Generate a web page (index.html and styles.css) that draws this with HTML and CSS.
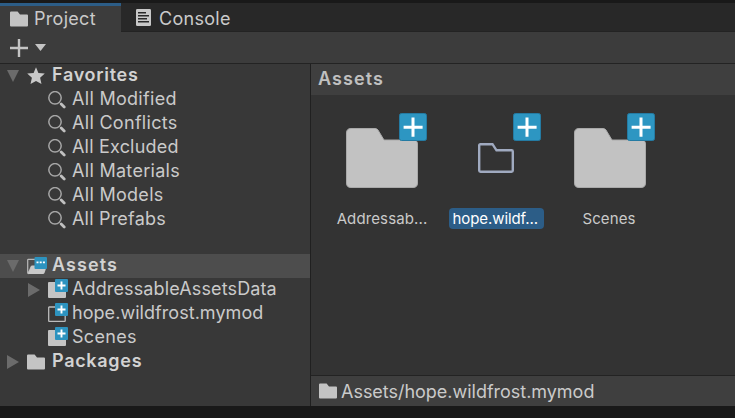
FILE: index.html
```
<!DOCTYPE html>
<html lang="en">
<head>
<meta charset="utf-8">
<title>Project</title>
<link rel="stylesheet" href="styles.css">
</head>
<body>
<svg class="defs" width="0" height="0">
  <symbol id="folder" viewBox="0 0 18 16"><path d="M0 1.6Q0 .5 1.1 .5H7.6L10 3.4H17Q18 3.4 18 4.4V14.5Q18 15.6 17 15.6H1Q0 15.6 0 14.5Z" fill="#c4c4c4"/></symbol>
  <symbol id="search" viewBox="0 0 18 18"><circle cx="7" cy="6.8" r="6.2" fill="none" stroke="#a6a6a6" stroke-width="1.5"/><path d="M13.200 13L16.200 16" stroke="#c0c0c0" stroke-width="2.800" stroke-linecap="round"/></symbol>
  <symbol id="plus" viewBox="0 0 28 28"><rect x=".5" y=".5" width="27" height="27" rx="2" fill="#2d96c2" stroke="#247ba3"/><path d="M14 4.6V23.8M4.6 14.2H23.6" stroke="#fff" stroke-width="3"/></symbol>
  <symbol id="bigfolder" viewBox="0 0 72 60"><path d="M5 .5H29Q31 .5 32 2L38 12H67Q71.500 12 71.500 16V55Q71.500 59.500 67 59.500H5Q.5 59.500 .5 55V5Q.5 .5 5 .5Z" fill="#c2c2c2" stroke="#a9a9a9"/></symbol>
  <symbol id="down" viewBox="0 0 12 12"><path d="M0 0H12L6 12Z" fill="#6b6b6b"/></symbol>
  <symbol id="right" viewBox="0 0 12 14"><path d="M0 0L12 7L0 14Z" fill="#6b6b6b"/></symbol>
  <symbol id="small" viewBox="0 0 20 20"><path d="M0 4Q0 3 1 3H9V8H18V18Q18 19 17 19H1Q0 19 0 18Z" fill="#c4c4c4"/></symbol>
  <symbol id="badge" viewBox="0 0 13 13"><rect width="13" height="13" rx="1" fill="#2d93bf"/><path d="M6.500 2.500V10.500M2.500 6.500H10.500" stroke="#fff" stroke-width="1.900"/></symbol>
</svg>
<div class="window">
  <nav class="tabs">
    <div class="tab active"><svg class="tabicon" width="18" height="16"><use href="#folder"/></svg><span>Project</span></div>
    <div class="tab"><svg class="tabicon" width="15" height="17" viewBox="0 0 15 17"><rect width="15" height="17" rx="1.200" fill="#c8c8c8"/><path d="M2 3.800H10M2 6.800H13M2 9.800H11M2 12.800H13" stroke="#282828" stroke-width="1.400"/></svg><span>Console</span></div>
  </nav>
  <div class="toolbar">
    <svg width="18" height="18" viewBox="0 0 18 18"><path d="M9 0V18M0 9H18" stroke="#c4c4c4" stroke-width="2.400"/></svg>
    <svg width="11" height="7" viewBox="0 0 11 7"><path d="M0 0H11L5.500 7Z" fill="#c4c4c4"/></svg>
  </div>
  <main class="panes">
    <aside class="tree">
      <div class="row bold"><svg class="arrow" width="12" height="12"><use href="#down"/></svg><svg class="icon" width="18" height="18" viewBox="0 0 18 18"><path d="M9 .3L11.400 6L17.800 6.600L13.100 10.800L14.500 17L9 13.900L3.500 17L4.900 10.800L.2 6.600L6.600 6Z" fill="#c9c9c9"/></svg><span>Favorites</span></div>
      <div class="row child"><svg class="icon" width="18" height="18"><use href="#search"/></svg><span>All Modified</span></div>
      <div class="row child"><svg class="icon" width="18" height="18"><use href="#search"/></svg><span>All Conflicts</span></div>
      <div class="row child"><svg class="icon" width="18" height="18"><use href="#search"/></svg><span class="snug">All Excluded</span></div>
      <div class="row child"><svg class="icon" width="18" height="18"><use href="#search"/></svg><span>All Materials</span></div>
      <div class="row child"><svg class="icon" width="18" height="18"><use href="#search"/></svg><span>All Models</span></div>
      <div class="row child"><svg class="icon" width="18" height="18"><use href="#search"/></svg><span class="snug">All Prefabs</span></div>
      <div class="row bold selected"><svg class="arrow" width="12" height="12"><use href="#down"/></svg><svg class="icon" width="20" height="18" viewBox="0 0 20 18"><path d="M.7 16.500V3Q.7 2.400 1.300 2.400H8M1 17L4.500 9" fill="none" stroke="#b9b9b9" stroke-width="1.200"/><path d="M1 17L4.600 8.500H20L17.500 16Q17 17 16 17Z" fill="#c9c9c9"/><rect x="7.500" y="0" width="12.500" height="12" rx="1" fill="#2d93bf"/><path d="M9.500 5.400H18" stroke="#fff" stroke-width="1.600" stroke-dasharray="2 1.200"/></svg><span class="wide">Assets</span></div>
      <div class="row child"><svg class="arrow" width="12" height="14"><use href="#right"/></svg><span class="icon badged"><svg width="20" height="20"><use href="#small"/></svg><svg class="mark" width="13" height="13"><use href="#badge"/></svg></span><span class="tight">AddressableAssetsData</span></div>
      <div class="row child"><span class="icon badged"><svg width="20" height="20" viewBox="0 0 20 20"><path d="M8 4H1.200Q.7 4 .7 4.500V17.700Q.7 18.300 1.200 18.300H16.500Q17.200 18.300 17.200 17.700V8" fill="none" stroke="#bcbcbc" stroke-width="1.300"/></svg><svg class="mark" width="13" height="13"><use href="#badge"/></svg></span><span class="tighter">hope.wildfrost.mymod</span></div>
      <div class="row child"><span class="icon badged"><svg width="20" height="20"><use href="#small"/></svg><svg class="mark" width="13" height="13"><use href="#badge"/></svg></span><span>Scenes</span></div>
      <div class="row bold"><svg class="arrow" width="12" height="14"><use href="#right"/></svg><svg class="icon" width="18" height="16"><use href="#folder"/></svg><span>Packages</span></div>
    </aside>
    <section class="content">
      <header class="heading">Assets</header>
      <div class="grid">
        <figure class="asset"><div class="thumb"><svg width="72" height="60"><use href="#bigfolder"/></svg><svg class="mark" width="28" height="28"><use href="#plus"/></svg></div><figcaption>Addressab...</figcaption></figure>
        <figure class="asset chosen"><div class="thumb"><svg width="36" height="30" viewBox="0 0 36 30"><path d="M2.500 1.200H14.500L18.500 7.300H33.500Q34.800 7.300 34.800 8.500V27.500Q34.800 28.700 33.500 28.700H2.500Q1.200 28.700 1.200 27.500V2.500Q1.200 1.200 2.500 1.200Z" fill="none" stroke="#a0aac0" stroke-width="2.400"/></svg><svg class="mark" width="28" height="28"><use href="#plus"/></svg></div><figcaption>hope.wildf...</figcaption></figure>
        <figure class="asset"><div class="thumb"><svg width="72" height="60"><use href="#bigfolder"/></svg><svg class="mark" width="28" height="28"><use href="#plus"/></svg></div><figcaption>Scenes</figcaption></figure>
      </div>
      <footer class="path"><svg width="18" height="16"><use href="#folder"/></svg><span class="tightest">Assets/hope.wildfrost.mymod</span></footer>
    </section>
  </main>
</div>
</body>
</html>
```

FILE: styles.css
```
* { box-sizing: border-box; }
body { margin: 0; background: #191919; color: #cacaca; font: 18px/24px Inter, "Liberation Sans", sans-serif; letter-spacing: .3px; overflow: hidden; }
svg { display: block; flex: none; }
.defs { position: absolute; }
.window { display: flex; flex-direction: column; height: 418px; padding: 3px 0 12px; }
.tabs { display: flex; height: 29px; background: #282828; }
.tab { display: flex; align-items: center; gap: 8px; padding: 3px 0 0 15px; border-bottom: 1px solid #232323; flex: 1; }
.tab.active { flex: none; gap: 6px; width: 121px; padding: 0 0 0 10px; background: #3c3c3c; border-top: 3px solid #2c5d87; border-bottom: 0; }
.tabicon { margin-bottom: 2px; }
.active .tabicon { margin-bottom: 1px; }
.toolbar { display: flex; align-items: center; gap: 7px; height: 32px; padding-left: 10px; background: #3c3c3c; border-bottom: 1px solid #232323; }
.panes { display: flex; flex: 1; min-height: 0; }
.tree { width: 311px; background: #383838; border-right: 1px solid #202020; }
.row { display: flex; align-items: center; height: 24px; padding-left: 7px; white-space: nowrap; }
.row > span:last-child { margin-top: -2px; }
.row .arrow { margin-right: 8px; }
.row .icon { margin-right: 7px; }
.bold { font-weight: 600; color: #d2d2d2; letter-spacing: .7px; }
.child { padding-left: 48px; }
.child .icon { margin-right: 6px; }
.child .arrow { margin-left: -20px; }
.selected { margin-top: 22px; background: #4d4d4d; }
.selected .icon { margin-right: 5px; }
.wide { letter-spacing: 1.1px; }
.snug { letter-spacing: .2px; }
.tight { letter-spacing: .13px; }
.tighter { letter-spacing: .05px; }
.tightest { letter-spacing: -.02px; }
.badged { position: relative; width: 18px; height: 20px; margin-top: -2px; }
.badged .mark { position: absolute; left: 7px; top: 0; }
.content { display: flex; flex-direction: column; flex: 1; min-width: 0; background: #333; }
.heading { height: 31px; padding: 3px 0 0 7px; background: #3f3f3f; font-weight: 600; color: #c0c0c0; letter-spacing: 1.1px; }
.grid { display: flex; flex: 1; gap: 18px; padding: 14px 0 0 23px; }
.asset { display: flex; flex-direction: column; align-items: center; width: 96px; margin: 0; }
.thumb { position: relative; display: flex; align-items: center; justify-content: center; width: 96px; height: 98px; }
.thumb .mark { position: absolute; right: 3px; top: 4px; }
figcaption { height: 21px; margin-top: 1px; padding: 1px 4px 0; border-radius: 4px; font-size: 15px; line-height: 20px; letter-spacing: .12px; white-space: nowrap; }
.asset:last-child figcaption { padding-right: 6px; }
.chosen figcaption { width: 95px; background: #2c5d87; color: #fff; letter-spacing: -.08px; }
.path { display: flex; align-items: center; gap: 4px; height: 31px; padding-left: 8px; background: #3f3f3f; border-top: 1px solid #232323; }
.path span { margin-top: 1px; }
```
